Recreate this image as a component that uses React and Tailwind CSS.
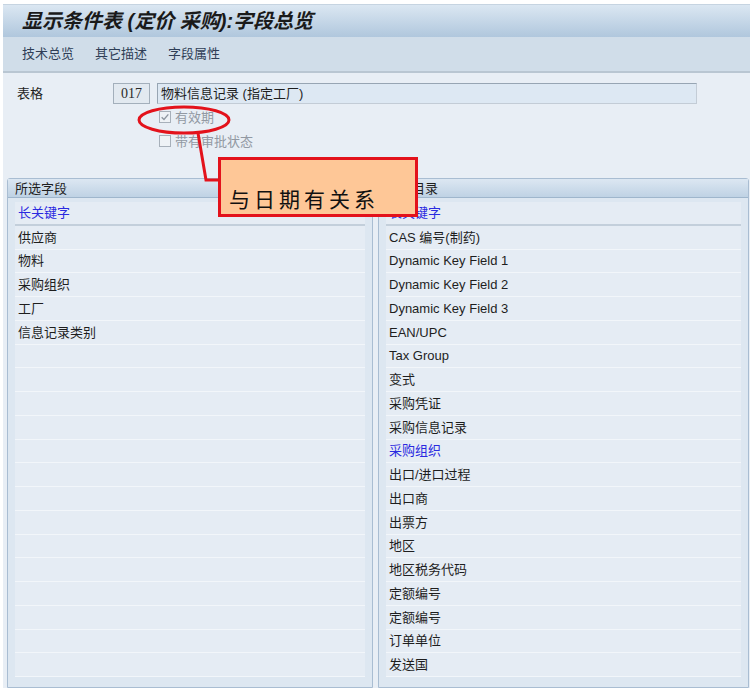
import React from 'react';

const leftRows = ['供应商', '物料', '采购组织', '工厂', '信息记录类别'];

const rightRows = [
  { text: 'CAS 编号(制药)' },
  { text: 'Dynamic Key Field 1' },
  { text: 'Dynamic Key Field 2' },
  { text: 'Dynamic Key Field 3' },
  { text: 'EAN/UPC' },
  { text: 'Tax Group' },
  { text: '变式' },
  { text: '采购凭证' },
  { text: '采购信息记录' },
  { text: '采购组织', blue: true },
  { text: '出口/进口过程' },
  { text: '出口商' },
  { text: '出票方' },
  { text: '地区' },
  { text: '地区税务代码' },
  { text: '定额编号' },
  { text: '定额编号' },
  { text: '订单单位' },
  { text: '发送国' },
];

const Row = ({ text, blue }) => (
  <div
    className={`h-[23.75px] flex items-center px-[3px] bg-[#e5ecf4] border-b border-[#f2f6fa] text-[13px] leading-none ${
      blue ? 'text-[#2a2ae0]' : 'text-[#1e1e1e]'
    }`}
  >
    {text}
  </div>
);

const Panel = ({ title, rows, width }) => {
  const filled = [...rows];
  while (filled.length < 19) filled.push({ text: '' });
  return (
    <div className={`${width} flex flex-col border border-[#a9bdd2] rounded-t-[3px] bg-[#dde7f1]`}>
      <div className="h-[19px] flex items-center px-[7px] bg-gradient-to-b from-[#dce7f2] to-[#bfd2e4] border-b border-[#9fb6cc] text-[13px] text-[#1e1e1e] leading-none">
        {title}
      </div>
      <div className="flex-1 px-[7px] pt-[4px]">
        <div className="h-[23.75px] flex items-center px-[3px] bg-[#e5ecf4] border-b-2 border-[#c3cfdb] text-[13px] leading-none text-[#2a2ae0]">
          长关键字
        </div>
        {filled.map((r, i) => (
          <Row key={i} text={r.text} blue={r.blue} />
        ))}
      </div>
    </div>
  );
};

const CheckBox = ({ checked, label }) => (
  <div className="flex items-center gap-[4px] h-[16px]">
    <div className="w-[12px] h-[12px] border border-[#a7b0ba] bg-[#eef2f6] flex items-center justify-center">
      {checked && (
        <svg viewBox="0 0 12 12" className="w-[10px] h-[10px]">
          <path d="M2 6.2 L4.8 9 L10 2.8" fill="none" stroke="#8d959f" strokeWidth="1.6" />
        </svg>
      )}
    </div>
    <span className="text-[13px] text-[#9299a3] leading-none">{label}</span>
  </div>
);

const App = () => {
  return (
    <div className="relative w-[750px] h-[691px] bg-white pt-[4px] pl-[3px] pb-[3px] overflow-hidden font-['Liberation_Sans','Noto_Sans_CJK_SC',sans-serif]">
      <div className="h-full flex flex-col bg-[#e8eef5]">
        {/* Title */}
        <div className="h-[33px] flex items-center px-[19px] bg-gradient-to-b from-[#dbe7f2] to-[#b0c7dd] border-t border-[#c6d4e1]">
          <span className="text-[20px] font-bold italic text-[#1a1a1a] leading-none">
            显示条件表 (定价 采购):字段总览
          </span>
        </div>

        {/* Toolbar */}
        <div className="h-[36px] flex items-center gap-[21px] px-[19px] bg-[#d0dde9] border-b-2 border-[#b9c6d2] text-[13px] text-[#2f3e56]">
          <span>技术总览</span>
          <span>其它描述</span>
          <span>字段属性</span>
        </div>

        {/* Form */}
        <div className="h-[105px] pt-[10px] pl-[14px]">
          <div className="flex items-center h-[21px]">
            <span className="w-[96px] text-[13px] text-[#1e1e1e]">表格</span>
            <div className="w-[37px] h-[21px] flex items-center justify-center border border-[#a3afbb] bg-[#e2e9f0] text-[14px] text-[#2a2a2a] font-['Liberation_Serif',serif]">
              017
            </div>
            <div className="ml-[7px] w-[540px] h-[21px] flex items-center px-[3px] border border-[#97a5b3] border-b-[#c3ccd6] border-r-[#c3ccd6] bg-[#dde8f3] text-[13px] text-[#1e1e1e]">
              物料信息记录 (指定工厂)
            </div>
          </div>
          <div className="ml-[142px] mt-[5px] flex flex-col gap-[8px]">
            <CheckBox checked label="有效期" />
            <CheckBox label="带有审批状态" />
          </div>
        </div>

        {/* Panels */}
        <div className="flex-1 flex gap-[5px] pl-[4px]">
          <Panel title="所选字段" rows={leftRows.map((t) => ({ text: t }))} width="w-[366px]" />
          <Panel title="字段目录" rows={rightRows} width="w-[371px]" />
        </div>
      </div>

      {/* Annotation */}
      <svg className="absolute left-0 top-0 pointer-events-none" width="750" height="691">
        <ellipse cx="184" cy="120" rx="45" ry="13" fill="none" stroke="#e3121b" strokeWidth="3" />
        <polyline points="198,133 206,180 220,180" fill="none" stroke="#e3121b" strokeWidth="3" />
      </svg>
      <div className="absolute left-[218px] top-[157px] w-[200px] h-[60px] bg-[#fec797] border-[3px] border-[#e3121b] flex items-end pl-[8px] pb-[5px]">
        <span className="text-[21px] leading-none tracking-[4px] text-[#111] font-['Noto_Sans_CJK_SC',sans-serif]">
          与日期有关系
        </span>
      </div>
    </div>
  );
};

export default App;
